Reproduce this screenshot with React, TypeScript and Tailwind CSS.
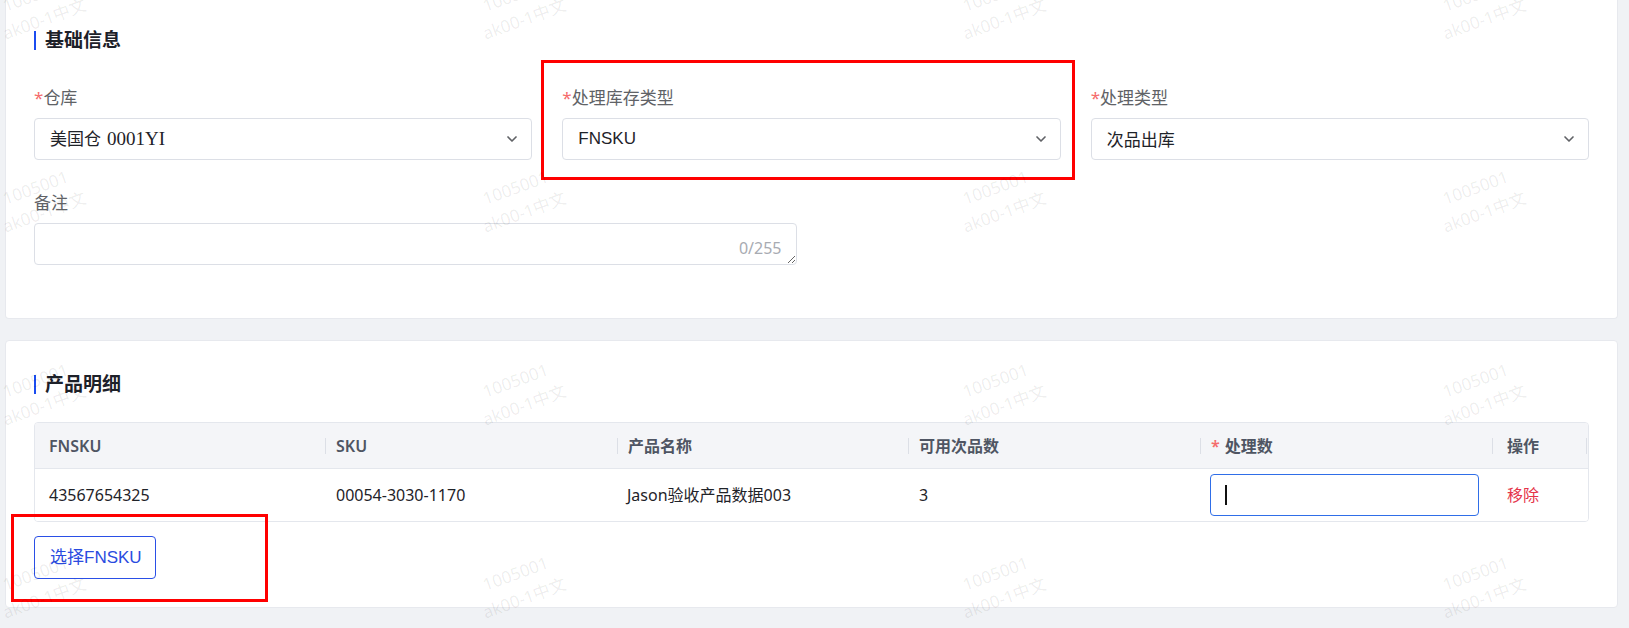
import React from "react";
import { ChevronDown } from "lucide-react";

function Label({ text, required }: { text: string; required?: boolean }) {
  return (
    <div className="mb-2 h-6 text-[17px] leading-6 text-[#606266]">
      {required && <span className="text-[#f56c6c]">*</span>}
      {text}
    </div>
  );
}

function Select({ children }: { children: React.ReactNode }) {
  return (
    <div className="flex h-[42px] items-center justify-between rounded-[4px] border border-[#dcdfe6] bg-white pl-[15px] pr-[11px] text-[#1f2329]">
      <div className="flex items-baseline">{children}</div>
      <ChevronDown size={16} strokeWidth={2.5} color="#606266" />
    </div>
  );
}

function SectionTitle({ text }: { text: string }) {
  return (
    <div className="flex h-[28px] items-center">
      <span className="h-[19px] w-[2px] bg-[#1b4cf0]" />
      <h2 className="ml-[9px] text-[19px] font-bold leading-[28px] text-[#1d2129]">{text}</h2>
    </div>
  );
}

function Divider() {
  return <span className="h-4 w-px shrink-0 bg-[#dcdfe6]" />;
}

const marks: { x: number; y: number }[] = [];
for (let r = 0; r < 4; r++) {
  for (let c = 0; c < 4; c++) {
    marks.push({ x: 40 + 480 * c, y: 7 + 193 * r });
  }
}

export default function App() {
  return (
    <div className="relative min-h-screen w-[1629px] overflow-hidden bg-[#f0f2f5] pl-[5px] pr-[11px] font-['Noto_Sans','Noto_Sans_CJK_SC',sans-serif]">
      {/* Card 1 */}
      <section className="rounded-b-[4px] border border-t-0 border-[#e7e9ee] bg-white px-[28px] pb-[53px] pt-[26px]">
        <SectionTitle text="基础信息" />
        <div className="mt-[32px] grid grid-cols-3 gap-x-[30px]">
          <div>
            <Label text="仓库" required />
            <Select>
              <span className="font-['Noto_Sans_CJK_SC',sans-serif] text-[17px]">美国仓</span>
              <span className="ml-[6px] font-['Liberation_Serif',serif] text-[19px]">0001YI</span>
            </Select>
          </div>
          <div>
            <Label text="处理库存类型" required />
            <Select>
              <span className="font-['Liberation_Sans',sans-serif] text-[17px]">FNSKU</span>
            </Select>
          </div>
          <div>
            <Label text="处理类型" required />
            <Select>
              <span className="font-['Noto_Sans_CJK_SC',sans-serif] text-[17px]">次品出库</span>
            </Select>
          </div>
        </div>
        <div className="mt-[31px] grid grid-cols-2 gap-x-[30px]">
          <div>
            <Label text="备注" />
            <div className="relative">
              <textarea className="block h-[42px] w-full rounded-[4px] border border-[#dcdfe6] bg-white px-[15px] py-[8px] text-[16px] outline-none" />
              <span className="pointer-events-none absolute bottom-[9px] right-[15px] text-[16px] leading-[16px] text-[#a8abb2]">
                0/255
              </span>
            </div>
          </div>
        </div>
      </section>

      {/* Card 2 */}
      <section className="mt-[21px] rounded-[4px] border border-[#e7e9ee] bg-white px-[28px] pb-[28px] pt-[29px]">
        <SectionTitle text="产品明细" />
        <div className="mt-[24px] overflow-hidden rounded-[4px] border border-[#e4e7ed]">
          <div className="grid h-[46px] grid-cols-[290px_292px_291px_292px_292px_1fr] items-center border-b border-[#e4e7ed] bg-[#f4f5f8] text-[16px] font-semibold text-[#4f5563]">
            <div className="pl-[14px]">FNSKU</div>
            <div className="flex items-center">
              <Divider />
              <span className="ml-[10px]">SKU</span>
            </div>
            <div className="flex items-center">
              <Divider />
              <span className="ml-[10px]">产品名称</span>
            </div>
            <div className="flex items-center">
              <Divider />
              <span className="ml-[10px]">可用次品数</span>
            </div>
            <div className="flex items-center">
              <Divider />
              <span className="ml-[10px] text-[#f56c6c]">*</span>
              <span className="ml-[5px]">处理数</span>
            </div>
            <div className="flex items-center">
              <Divider />
              <span className="ml-[14px]">操作</span>
              <span className="ml-auto mr-[1px] h-4 w-px bg-[#dcdfe6]" />
            </div>
          </div>
          <div className="grid h-[52px] grid-cols-[290px_292px_291px_292px_292px_1fr] items-center bg-white text-[16px] text-[#1f2329]">
            <div className="pl-[14px]">43567654325</div>
            <div className="pl-[11px]">00054-3030-1170</div>
            <div className="pl-[10px]">Jason验收产品数据003</div>
            <div className="pl-[11px]">3</div>
            <div className="pl-[10px] pr-[13px]">
              <div className="flex h-[42px] w-full items-center rounded-[4px] border border-[#2f6ee8] bg-white pl-[14px]">
                <span className="h-[20px] w-[2px] bg-[#111]" />
              </div>
            </div>
            <div className="pl-[15px] text-[#e5344a]">移除</div>
          </div>
        </div>
        <button className="mt-[14px] flex h-[43px] w-[122px] items-center rounded-[4px] border border-[#2a4fe6] bg-white pl-[15px] font-['Liberation_Sans','Noto_Sans_CJK_SC',sans-serif] text-[17px] text-[#2a4be0]">
          选择FNSKU
        </button>
      </section>

      {/* Annotation boxes */}
      <div className="pointer-events-none absolute left-[541px] top-[60px] z-10 h-[120px] w-[534px] border-[3px] border-[#ff0000]" />
      <div className="pointer-events-none absolute left-[11px] top-[514px] z-10 h-[88px] w-[257px] border-[3px] border-[#ff0000]" />

      {/* Watermarks */}
      <div className="pointer-events-none absolute inset-0 z-20 overflow-hidden">
        {marks.map((m, i) => (
          <div
            key={i}
            className="absolute -translate-x-1/2 -translate-y-1/2 -rotate-20 whitespace-nowrap text-center text-[17px] leading-[26px] text-[rgba(0,0,0,0.08)]"
            style={{ left: m.x, top: m.y }}
          >
            <div>1005001</div>
            <div>ak00-1中文</div>
          </div>
        ))}
      </div>
    </div>
  );
}
